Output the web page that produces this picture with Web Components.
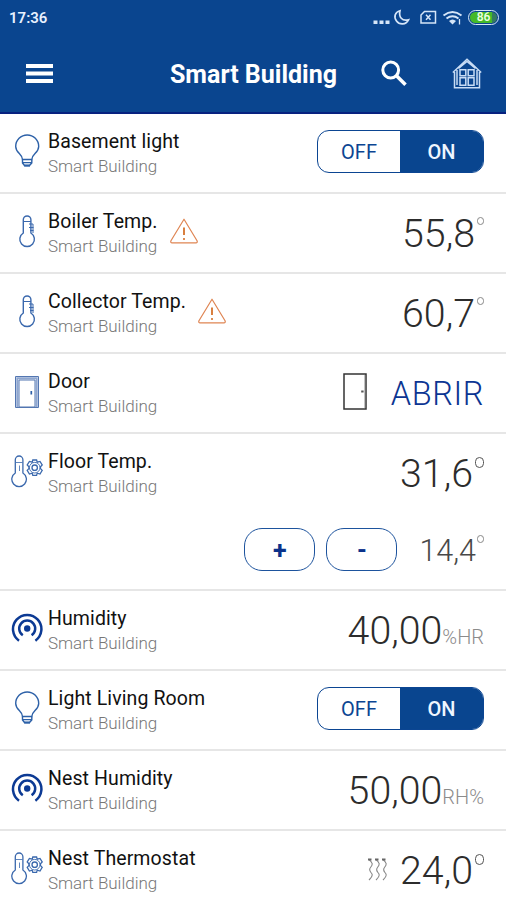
<!DOCTYPE html>
<html lang="en">
<head>
<meta charset="utf-8">
<title>Smart Building</title>
<style>
html,body{margin:0;padding:0;height:900px;overflow:hidden;background:#fff;font-family:Roboto,"Liberation Sans",sans-serif}
</style>
</head>
<body>
<smart-app></smart-app>
<script>
const ICONS = {
  bulb: `<svg width="32" height="36" viewBox="0 0 32 36" fill="none" stroke="#2d61a8" stroke-width="1.4"><path d="M11.5 25.5C11.5 20 4.700 19 4.700 12.500A11.500 11.500 0 0 1 27.700 12.500C27.700 19 20.800 20 20.800 25.500Z"/><path d="M11.500 25.500V29L13.500 31.500H18.500L20.800 29V25.500M11.500 28.600H20.800"/><path d="M13.200 31.600H19" stroke-width="2"/></svg>`,
  thermo: `<svg width="32" height="36" viewBox="0 0 32 36" fill="none" stroke="#3a68ad" stroke-width="1.4"><path d="M12.300 19V5.800A3.800 3.800 0 0 1 19.900 5.800V19A7.300 7.300 0 1 1 12.300 19Z"/><path d="M13 7.500H20M18 10H22V19M18 13.500H22.500M19 16.500H22.500" stroke-width="1"/></svg>`,
  door: `<svg width="32" height="36" viewBox="0 0 32 36" fill="none" stroke="#5376b1" stroke-width="1"><path d="M4.500 2.500H27.500V33.500H4.500Z"/><path d="M6.300 33V4.300H25.700V33" stroke="#8ea6d0" stroke-width="2"/><path d="M8 33V6H24V33Z"/><path d="M20.300 17V20.500" stroke-width="1.700" stroke="#2d5fa8"/></svg>`,
  thermoGear: `<svg width="36" height="36" viewBox="0 0 36 36" fill="none" stroke="#3a68ad" stroke-width="1.300"><path d="M4.300 19V5.800A3.800 3.800 0 0 1 11.900 5.800V19A7.300 7.300 0 1 1 4.300 19Z"/><path d="M5 8.500H11.500M8.500 11.500V17" stroke-width=".8"/><g transform="translate(23.700 13.700)"><circle r="2.700"/><circle r="5.300" stroke-width=".9"/><path d="M-1.900-7.700H1.900L2.500-5.500L5.300-6.300L7.500-2.700L5.800-.9V.9L7.500 2.700L5.300 6.300L2.500 5.500L1.900 7.700H-1.900L-2.500 5.500L-5.300 6.300L-7.500 2.700L-5.800 .9V-.9L-7.500-2.700L-5.300-6.300L-2.500-5.500Z"/></g></svg>`,
  sensor: `<svg width="32" height="36" viewBox="0 0 32 36" fill="none" stroke="#0c3a94" stroke-width="2.500"><circle cx="16.200" cy="17.500" r="3.200" fill="#0c3a94" stroke="none"/><path d="M11.800 24.300A8 8 0 1 1 20.600 24.300"/><path d="M8 29.700A14.200 14.200 0 1 1 24.400 29.700"/></svg>`,
  menu: `<svg width="27" height="21" viewBox="0 0 27 21" fill="#fff"><path d="M0 1H27V5H0ZM0 8.500H27V12.500H0ZM0 16H27V20H0Z"/></svg>`,
  search: `<svg width="26" height="27" viewBox="0 0 26 27" fill="none" stroke="#fff" stroke-width="3"><circle cx="9.700" cy="10" r="7.900"/><path d="M15.500 15.800L24.500 24.800" stroke-width="3.600"/></svg>`,
  home: `<svg width="30" height="31" viewBox="0 0 30 31" fill="none" stroke="#c8dcf5" stroke-width="1.500"><path d="M.8 14.500L15 1.200L29.200 14.500M2.500 14V29.700H27.500V14M5 12V27M25 12V27M6.500 10.500L15 3.500L23.500 10.500"/><path d="M8 11.700H13.800V17.800H8ZM16.200 11.700H22V17.800H16.200ZM8 19.800H13.800V27.300H8ZM16.200 19.800H22V27.300H16.200Z"/></svg>`,
  warn: `<svg width="28" height="26" viewBox="0 0 28 26" fill="none" stroke="#df8553" stroke-width="1.200" stroke-linejoin="round"><path d="M14 1.200L27.200 23Q27.500 24.800 26 24.800H2Q.5 24.800 .8 23Z"/><path d="M14 9.500V17" stroke="#d2691e" stroke-width="1.700"/><path d="M14 20V22" stroke="#d2691e" stroke-width="1.500"/></svg>`,
  doorPlain: `<svg width="24" height="37" viewBox="0 0 24 37" fill="none" stroke="#333" stroke-width="1.500"><path d="M1 1H23V36H1Z"/><path d="M18.200 18.500H20.600" stroke="#555" stroke-width="2"/><path d="M21.600 2V35" stroke="#aaa" stroke-width=".8"/></svg>`,
  heat: `<svg width="20" height="23" viewBox="0 0 20 23" fill="none" stroke="#888" stroke-width="1.100"><path d="M1 1.500C5 5 5 6.500 2.500 9.500S3 14 4 16S3 20 1 22"/><path d="M8 1.500C12 5 12 6.500 9.500 9.500S10 14 11 16S10 20 8 22"/><path d="M15 1.500C19 5 19 6.500 16.500 9.500S17 14 18 16S17 20 15 22"/><path d="M0 1.500H3.500M7 1.500H10.500M14 1.500H17.500" stroke="#666" stroke-width="2"/></svg>`
};
function define(name, html) {
  customElements.define(name, class extends HTMLElement {
    connectedCallback() {
      if (this.shadowRoot) return;
      this.attachShadow({mode: 'open'}).innerHTML = typeof html === 'function' ? html(this) : html;
    }
  });
}
define('ui-icon', el => `<style>:host{display:block;flex:none}svg{display:block}</style>${ICONS[el.getAttribute('name')]}`);
define('status-bar', `<style>
:host{display:flex;align-items:center;height:34px;padding:1px 7px 0 9px;color:#e8f1ff;box-sizing:border-box}
.time{font-size:15px;font-weight:600;letter-spacing:0;flex:1;line-height:18px}
svg{display:block;margin-right:2px}
.battery{box-sizing:border-box;width:31px;height:15px;border:1.500px solid #d5e5f8;border-radius:8px;padding:1px;display:flex}
.charge{flex:1;border-radius:6px;background:linear-gradient(90deg,#44b928 80%,#347a60 80%);color:#eaffdf;font-size:12px;line-height:11px;font-weight:600;text-align:center}
</style>
<span class="time">17:36</span>
<svg width="93" height="18" viewBox="0 0 93 18" fill="none" stroke="#d5e5f8" stroke-width="1.500">
<path d="M.5 13.300H4.500M6.500 13.300H10.500M12.500 13.300H16.500" stroke-width="3.400"/>
<path d="M27 1.700C22 3 20.500 8 23.500 12C26.500 16 33 16 35.500 10.800C29 12.500 25.500 8 27 1.700Z" stroke-width="1.700"/>
<path d="M51.500 2.500H62.500V14H48V6Z"/><path d="M53 5.800L57.500 10.800M57.500 5.800L53 10.800"/>
<path d="M70.500 6.500Q79.500-.500 88.500 6.500M73.500 9.500Q79.500 5 85.500 9.500" stroke-width="1.900"/><path d="M76 12Q79.500 9 83 12L79.500 15.500Z" fill="#d5e5f8" stroke="none"/><path d="M86.500 10V15.500" stroke-width="1.300"/>
</svg><span class="battery"><span class="charge">86</span></span>`);
define('app-bar', `<style>
:host{display:flex;align-items:center;height:78px;padding:1px 24px 0 26px;box-sizing:border-box;color:#fff}
h1{margin:3px 0 0;flex:1;text-align:right;font-size:25px;line-height:30px;font-weight:700;letter-spacing:0}
.search{margin:0 45px 0 44px}
</style><ui-icon name="menu"></ui-icon><h1>Smart Building</h1><ui-icon class="search" name="search"></ui-icon><ui-icon name="home"></ui-icon>`);
define('device-row', el => `<style>
:host{display:block;box-sizing:border-box;height:80px;border-bottom:2px solid #e6e6e6;background:#fff}
.main{display:flex;height:78px;box-sizing:border-box;padding:0 22px 0 11px}
ui-icon.lead{width:37px;margin-top:20px}
h2{margin:16px 0 0;font-size:19.500px;line-height:24px;font-weight:400;color:#111;letter-spacing:.1px;white-space:nowrap}
p{margin:1px 0 0;font-size:17px;line-height:22px;font-weight:300;color:#777;letter-spacing:-.02px;white-space:nowrap}
.warn{margin:24px 0 0 12px}
.right{flex:1;display:flex;justify-content:flex-end;height:78px}
</style><div class="main"><ui-icon class="lead" name="${el.getAttribute('icon')}"></ui-icon>
<div><h2>${el.getAttribute('name')}</h2><p>Smart Building</p></div>
${el.hasAttribute('alert') ? '<ui-icon class="warn" name="warn"></ui-icon>' : ''}
<div class="right"><slot></slot></div></div><slot name="footer"></slot>`);
define('on-off', `<style>
:host{display:flex;box-sizing:border-box;width:167px;height:43px;margin-top:16px;border:1px solid #0b4592;border-radius:12px;overflow:hidden;color:#0b4592;font-size:20px;line-height:42px;font-weight:400}
span{width:82px;text-align:center}.on{flex:1;background:#09458f;color:#eff6ff;font-weight:500}
</style><span>OFF</span><span class="on">ON</span>`);
define('reading-value', `<style>
:host{display:flex;font-size:39.300px;line-height:48px;font-weight:300;color:#2c2c2c;margin-top:16px;white-space:nowrap}
::slotted(*){font-size:20px;color:#8b8b8b}
</style><slot></slot><slot name="unit"></slot>`);
define('degree-mark', `<style>:host{display:block;box-sizing:border-box;width:7px;height:8px;border:1px solid #888;border-radius:4px;margin:7px 0 0 2px}:host([large]){width:9px;height:11px;border-color:#555;border-radius:5px;margin:7px 0 0 2px}</style>`);
define('pill-button', `<style>:host{display:block;box-sizing:border-box;width:71px;height:43px;border:1.500px solid #1d539d;border-radius:18px;color:#0b328b;text-align:center;font-size:25px;line-height:43px;font-weight:700}</style><slot></slot>`);
define('setpoint-bar', `<style>:host{display:flex;height:76px;padding:16px 22px 0 0;box-sizing:border-box;justify-content:flex-end;gap:11px}
.v{display:flex;margin-left:11px;font-size:30.500px;line-height:46px;font-weight:300;color:#484848}</style>
<pill-button>+</pill-button><pill-button>-</pill-button><span class="v">14,4<degree-mark style="margin:7px 0 0 1px"></degree-mark></span>`);
define('smart-app', `<style>
:host{display:block;width:506px;height:900px;overflow:hidden;background:#fff}
header{height:114px;box-sizing:border-box;background:#0a458f;border-bottom:2px solid #07217f}
.floor{height:157px}
.open{font-size:32.500px;line-height:40px;font-weight:300;color:#0c3592;margin:20px 0 0 24px;letter-spacing:.6px}
.door{margin-top:19px}.heat{margin:27px 12px 0 0}
.unit{padding-top:6px}
</style><header><status-bar></status-bar><app-bar></app-bar></header>
<device-row icon="bulb" name="Basement light"><on-off></on-off></device-row>
<device-row icon="thermo" name="Boiler Temp." alert><reading-value>55,8<degree-mark slot="unit"></degree-mark></reading-value></device-row>
<device-row icon="thermo" name="Collector Temp." alert><reading-value>60,7<degree-mark slot="unit"></degree-mark></reading-value></device-row>
<device-row icon="door" name="Door"><ui-icon class="door" name="doorPlain"></ui-icon><span class="open">ABRIR</span></device-row>
<device-row class="floor" icon="thermoGear" name="Floor Temp."><reading-value>31,6<degree-mark large slot="unit"></degree-mark></reading-value><setpoint-bar slot="footer"></setpoint-bar></device-row>
<device-row icon="sensor" name="Humidity"><reading-value>40,00<span slot="unit" class="unit">%HR</span></reading-value></device-row>
<device-row icon="bulb" name="Light Living Room"><on-off></on-off></device-row>
<device-row icon="sensor" name="Nest Humidity"><reading-value>50,00<span slot="unit" class="unit">RH%</span></reading-value></device-row>
<device-row icon="thermoGear" name="Nest Thermostat"><ui-icon class="heat" name="heat"></ui-icon><reading-value>24,0<degree-mark large slot="unit"></degree-mark></reading-value></device-row>`);
</script>
</body>
</html>
